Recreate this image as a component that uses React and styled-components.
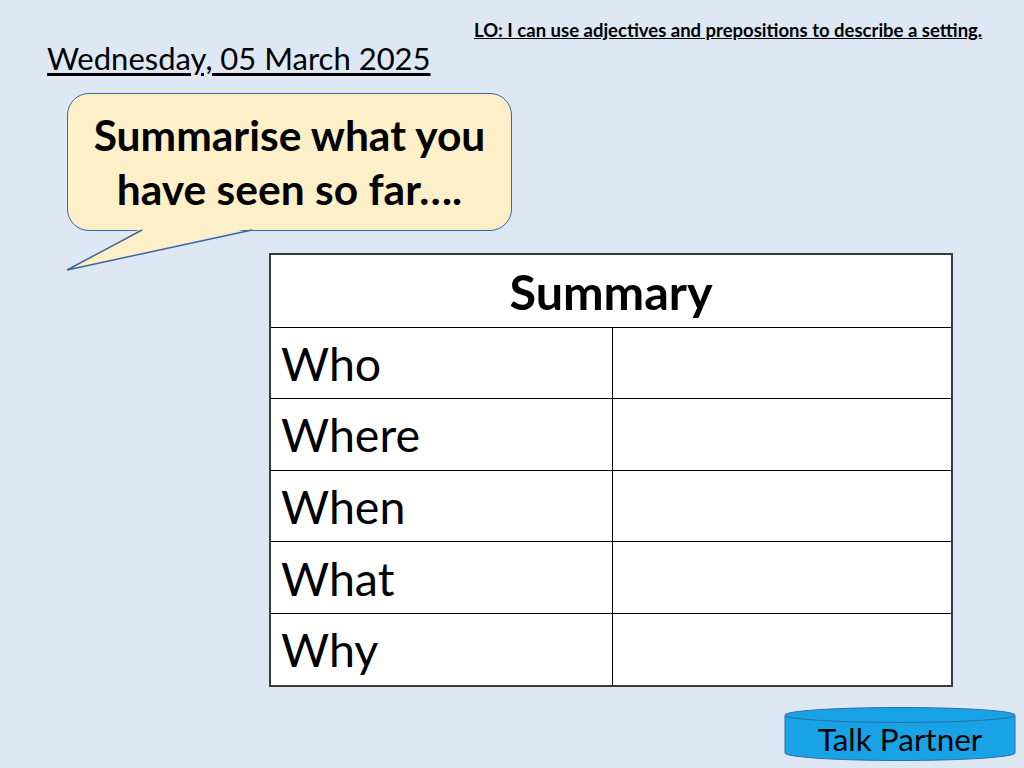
import React from 'react';
import styled, { createGlobalStyle } from 'styled-components';

const GlobalStyle = createGlobalStyle`
  html, body {
    margin: 0;
    padding: 0;
    background: #dee8f5;
  }
  body {
    font-family: Lato, "Open Sans", "Liberation Sans", sans-serif;
    color: #000;
  }
`;

const Slide = styled.div`
  width: 1024px;
  height: 768px;
  background: #dee8f5;
  display: flex;
  flex-direction: column;
  overflow: hidden;
`;

const Objective = styled.div`
  margin: 20px 0 0 474px;
  font-size: 18.5px;
  line-height: 20px;
  font-weight: 700;
  text-decoration: underline;
  white-space: nowrap;
`;

const DateLine = styled.div`
  margin: 0 0 0 47px;
  font-size: 31px;
  line-height: 36px;
  text-decoration: underline;
  text-underline-offset: 3px;
  white-space: nowrap;
`;

const Bubble = styled.div`
  position: relative;
  margin: 17px 0 0 67px;
  width: 445px;
  height: 138px;
  box-sizing: border-box;
  border: 1.5px solid #3d65a0;
  border-radius: 22px;
  background: #fdefc8;
  display: flex;
  align-items: center;
  justify-content: center;
  text-align: center;
  font-size: 42.5px;
  line-height: 54px;
  font-weight: 700;
  white-space: nowrap;
`;

const Tail = styled.svg`
  position: absolute;
  left: -1.5px;
  top: 100%;
  overflow: visible;
`;

const Summary = styled.div`
  margin: 22px 0 0 269px;
  width: 684px;
  box-sizing: border-box;
  border: 2px solid #3a3a3a;
  background: #fff;
  display: grid;
  grid-template-columns: 341px 1fr;
  grid-auto-rows: 71.6px;
`;

const HeadCell = styled.div`
  grid-column: 1 / -1;
  display: flex;
  align-items: center;
  justify-content: center;
  font-size: 48.5px;
  font-weight: 700;
`;

const Cell = styled.div`
  border-top: 1px solid #000;
  border-left: ${({ side }) => (side ? '1px solid #000' : 'none')};
  display: flex;
  align-items: center;
  padding-left: 10px;
  font-size: 46.5px;
`;

const Footer = styled.div`
  margin: 19px 8px 0 0;
  align-self: flex-end;
`;

const Cylinder = styled.div`
  position: relative;
  width: 232px;
  height: 56px;
  display: flex;
  align-items: center;
  justify-content: center;
  padding-top: 10px;
  box-sizing: border-box;
  font-size: 31.5px;
`;

const CylinderShape = styled.svg`
  position: absolute;
  inset: 0;
`;

const Label = styled.span`
  position: relative;
`;

const rows = ['Who', 'Where', 'When', 'What', 'Why'];

export default function App() {
  return (
    <Slide>
      <GlobalStyle />
      <Objective>LO: I can use adjectives and prepositions to describe a setting.</Objective>
      <DateLine>Wednesday, 05 March 2025</DateLine>
      <Bubble>
        <span>
          Summarise what you
          <br />
          have seen so far….
        </span>
        <Tail width="190" height="42" viewBox="0 0 190 42">
          <polygon points="75,-2 185,-2 0,40" fill="#fdefc8" />
          <polyline points="75,0 0,40 185,0" fill="none" stroke="#3d65a0" strokeWidth="1.5" strokeLinejoin="miter" />
        </Tail>
      </Bubble>
      <Summary>
        <HeadCell>Summary</HeadCell>
        {rows.map((r) => (
          <React.Fragment key={r}>
            <Cell>{r}</Cell>
            <Cell side />
          </React.Fragment>
        ))}
      </Summary>
      <Footer>
        <Cylinder>
          <CylinderShape width="232" height="56" viewBox="0 0 232 56">
            <path d="M1 9 L1 47 A115 7.5 0 0 0 231 47 L231 9" fill="#18a3e6" stroke="#2f6ea8" strokeWidth="1" />
            <ellipse cx="116" cy="9" rx="115" ry="7.5" fill="#18a3e6" stroke="#2f6ea8" strokeWidth="1" />
          </CylinderShape>
          <Label>Talk Partner</Label>
        </Cylinder>
      </Footer>
    </Slide>
  );
}
